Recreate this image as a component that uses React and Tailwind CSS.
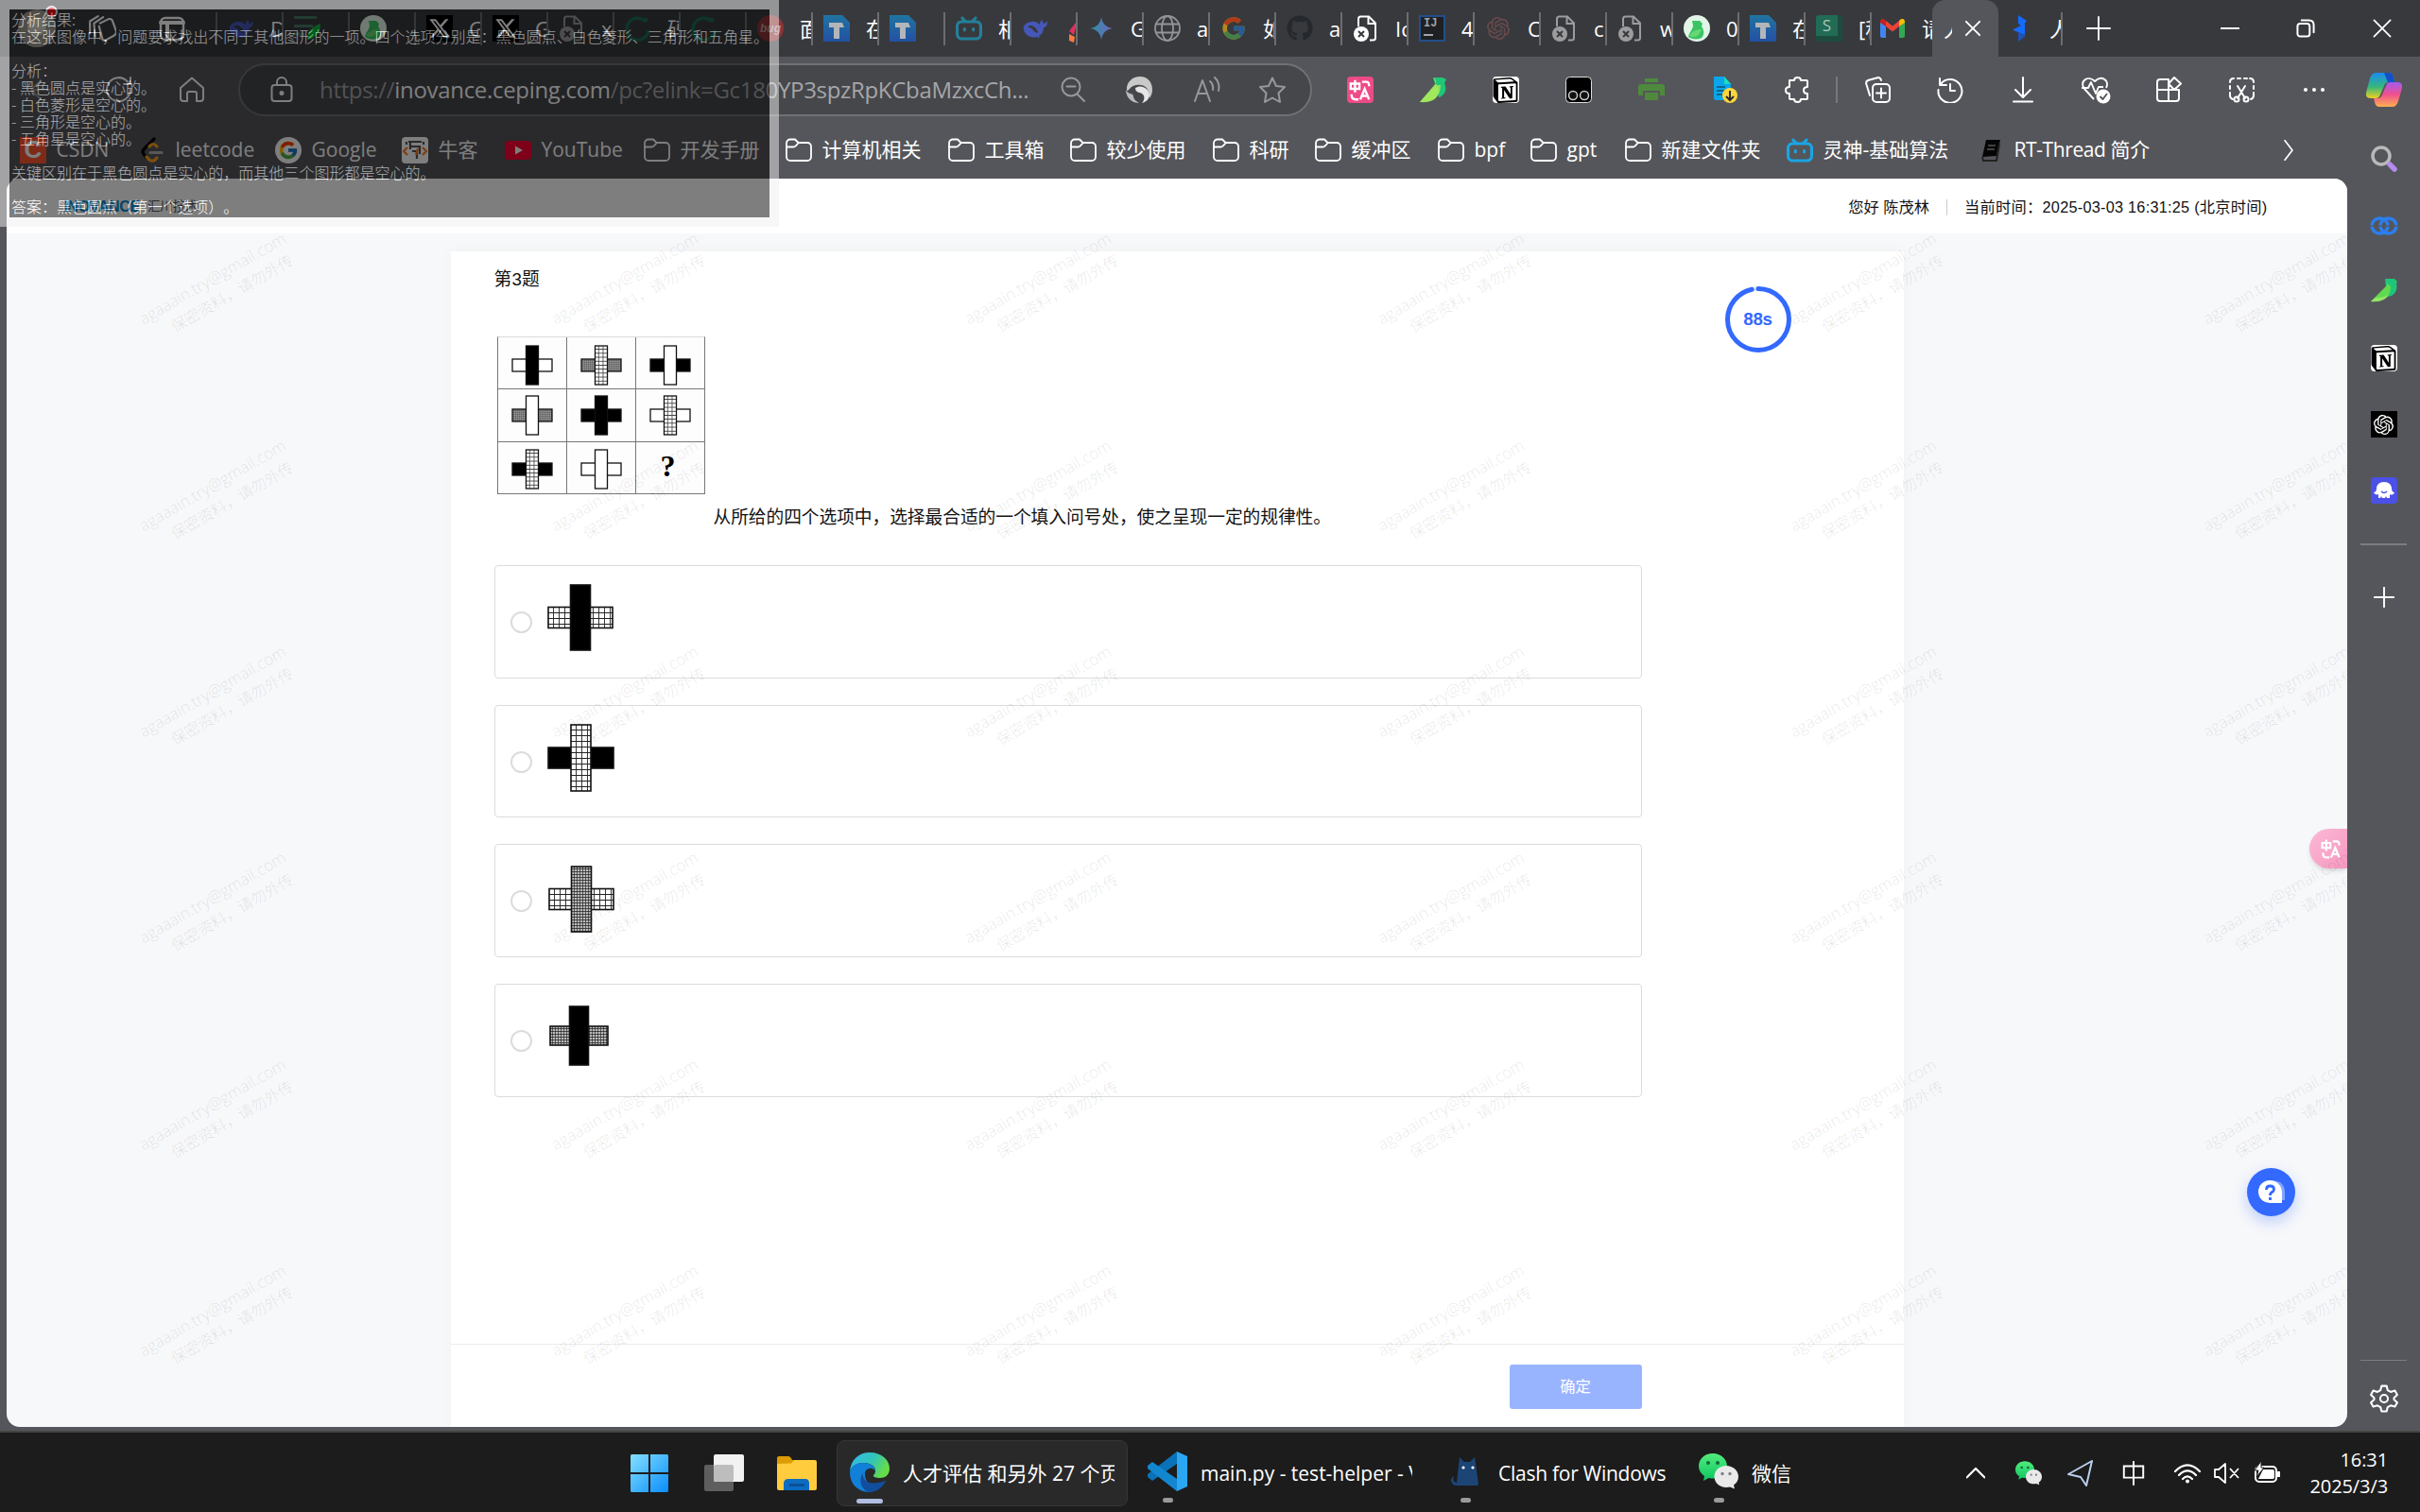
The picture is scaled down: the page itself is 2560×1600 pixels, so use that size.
import React from "react";
import { FcGoogle } from "react-icons/fc";
import { FaGithub, FaXTwitter } from "react-icons/fa6";
import { SiBilibili, SiOpenai, SiNotion } from "react-icons/si";

/* ---------- small icon helpers ---------- */

const Line = ({ size = 28, w = 2, color = "#fff", className = "", children }) => (
  <svg className={"shrink-0 " + className} width={size} height={size} viewBox="0 0 28 28" fill="none" stroke={color} strokeWidth={w} strokeLinecap="round" strokeLinejoin="round">
    {children}
  </svg>
);

const FolderIcon = () => (
  <Line w={1.8}>
    <path d="M1 6.500a4 4 0 0 1 4-4h5l3.500 3.500H23a4 4 0 0 1 4 4v11a4 4 0 0 1-4 4H5a4 4 0 0 1-4-4z" />
    <path d="M1 10.500h7.500a3 3 0 0 0 2-.8L13.500 6.500" />
  </Line>
);

const DeepSeek = () => (
  <svg width="28" height="28" viewBox="0 0 28 28">
    <path fill="#4657b8" d="M27 7c-2 0-2 2-4 2-1-1-1.500-3-1-4-3 1-3 4-3 5-3-2-5-4-9-3C3 8 1 12 2 16c2 6 9 9 14 7 1 1 2 1 3 1 0-1-1-1-1-2 4-2 5-6 5-9 2 0 4-2 4-6z" />
    <path fill="#38393d" d="M9 11c3 0 6 2 8 7 0 1-2 1-3 0-2-2-4-5-7-5-1 0 0-2 2-2z" />
  </svg>
);

const LeafDoc = () => (
  <svg width="28" height="28" viewBox="0 0 28 28">
    <path d="M1 2.500h22M1 11.500h18M1 20h9" stroke="#477a66" strokeWidth="3" strokeLinecap="round" />
    <path d="M28 9c0 10-5 16-14 17 0-9 5-14 14-17z" fill="#10b53f" />
  </svg>
);

const BirdRound = () => (
  <svg width="28" height="28" viewBox="0 0 28 28">
    <circle cx="14" cy="14" r="14" fill="#e2f6e8" />
    <path d="M9 6h8l3 3-1 3c3 4 3 9 0 12-2 2-11 2-14-1 1-5 5-8 5-12z" fill="#3bc463" />
    <path d="M6 22c3-5 7-7 13-7-2 6-6 10-13 7z" fill="#7be07a" opacity=".7" />
  </svg>
);

const XIcon = () => (
  <div className="flex size-7 items-center justify-center bg-black text-[24px] text-white">
    <FaXTwitter />
  </div>
);

const FileX = ({ bright }) => (
  <svg width="28" height="28" viewBox="0 0 28 28" opacity={bright ? 1 : 0.5}>
    <path d="M6 12V4a2.500 2.500 0 0 1 2.500-2.500H17l7 7V24a2.500 2.500 0 0 1-2.500 2.500H18M16.500 2v7H24" fill="none" stroke="#fff" strokeWidth="2" />
    <circle cx="9" cy="20" r="8" fill="#fff" />
    <path d="M6 17l6 6M12 17l-6 6" stroke="#38393d" strokeWidth="2" />
  </svg>
);

const Ring = () => (
  <svg width="28" height="28" viewBox="0 0 28 28">
    <path d="M22 7a11.500 11.500 0 1 0 3 9" fill="none" stroke="#1f6a55" strokeWidth="3.500" />
    <circle cx="22" cy="5" r="2.500" fill="#1f6a55" />
  </svg>
);

const Bug = () => (
  <div className="flex size-7 items-center justify-center rounded-full bg-[#8e3338] font-['Liberation_Sans',sans-serif] text-[12px] font-bold italic text-[#b9999a]">bug</div>
);

const TDoc = () => (
  <svg width="28" height="28" viewBox="0 0 28 28">
    <defs>
      <linearGradient id="tdoc" x1="0" y1="0" x2="0" y2="1">
        <stop offset="0" stopColor="#1f74a0" />
        <stop offset="1" stopColor="#2450a4" />
      </linearGradient>
    </defs>
    <path d="M0 0h20l8 8v20H0z" fill="url(#tdoc)" />
    <path d="M6 8h14l2 5h-5v12h-6V13H6z" fill="#b2b5b9" />
  </svg>
);

const Gemini = () => (
  <svg width="28" height="28" viewBox="0 0 28 28">
    <defs>
      <linearGradient id="gem" x1="0" y1="0" x2="1" y2="0">
        <stop offset="0" stopColor="#2f8fa0" />
        <stop offset="1" stopColor="#6a6ac0" />
      </linearGradient>
    </defs>
    <path d="M14 2c1 7 5 11 12 12-7 1-11 5-12 12-1-7-5-11-12-12 7-1 11-5 12-12z" fill="url(#gem)" />
  </svg>
);

const Globe = () => (
  <Line w={1.8} color="#939498">
    <circle cx="14" cy="14" r="13" />
    <ellipse cx="14" cy="14" rx="6" ry="13" />
    <path d="M2 9.500h24M2 18.500h24" />
  </Line>
);

const IJ = () => (
  <div className="flex size-7 flex-col justify-between border-2 border-[#22508c] bg-[#1f2023] px-[3px] pb-1 pt-px font-['Liberation_Mono',monospace] text-[12px] font-bold leading-[13px] text-[#a3a4a8]">
    IJ
    <i className="block h-0.5 w-2.5 bg-[#a3a4a8]" />
  </div>
);

const SDoc = () => (
  <div className="flex size-7 justify-center rounded-[3px] border-b-[6px] border-r-[5px] border-[#1d4c3e] bg-[#226b54] text-[17px] leading-[22px] text-[#a9c4bb]">S</div>
);

const Gmail = () => (
  <svg className="shrink-0" width="26" height="20" viewBox="0 0 26 20">
    <path d="M0 3v15a2 2 0 0 0 2 2h4V8z" fill="#4285f4" />
    <path d="M26 3v15a2 2 0 0 1-2 2h-4V8z" fill="#34a853" />
    <path d="M6 8v-6l7 5.500L20 2v6l-7 5.500z" fill="#ea4335" />
    <path d="M0 3c0-3 3-4 5-2l1 1v6L0 4z" fill="#c5221f" />
    <path d="M26 3c0-3-3-4-5-2l-1 1v6l6-4z" fill="#fbbc04" />
  </svg>
);

const BlueBolt = () => (
  <svg className="shrink-0" width="14" height="28" viewBox="0 0 14 28">
    <path d="M5 0l9 6-5 6-4-3zM0 15l12-6v12L0 16z" fill="#146bff" />
    <path d="M5 18l8 4-8 6z" fill="#1f53b5" />
  </svg>
);

const Bird = () => (
  <svg width="28" height="28" viewBox="0 0 28 28">
    <path d="M14 1h10l4 2-2 4c3 6 1 13-6 15z" fill="#1fc67a" />
    <path d="M14 1c4 4 3 4 3 6L0 27c12 1 20-3 20-13z" fill="#8fe35c" />
    <path d="M18 9c-5 4-12 11-18 18 13 1 22-5 22-18z" fill="#a7ea5e" opacity=".75" />
  </svg>
);

const BirdSide = () => (
  <svg width="28" height="26" viewBox="0 0 28 26">
    <path d="M15 1h10l3 3-1 2c2 8-3 14-10 14z" fill="#1fc67a" />
    <path d="M17 5v3L0 25c12 1 21-4 21-16-2-2-4-2-4-4z" fill="#62d94f" />
    <path d="M5 21c6 0 11-1 14-3-3 5-10 8-19 7z" fill="#94e667" />
  </svg>
);

const Translate = ({ s = 28 }) => (
  <svg width={s} height={s} viewBox="0 0 28 28" fill="none" stroke="#fff" strokeWidth="2.600">
    <path d="M3 7h10v6H3zM8 3v14M16 5h5q3 0 3 5M4 19v1q0 5 5 5h3M14 25l5-12 5 12M15.500 21h7" />
  </svg>
);

const OpenAIMark = ({ className = "" }) => <SiOpenai className={className} />;

const WeChat = ({ size = 42 }) => (
  <svg width={size} height={size} viewBox="0 0 42 42">
    <defs>
      <linearGradient id="wcg" x1="0" y1="0" x2="0" y2="1">
        <stop offset="0" stopColor="#52ec7c" />
        <stop offset="1" stopColor="#0cc662" />
      </linearGradient>
    </defs>
    <path d="M15 2C6 2 0 8 0 15.500c0 4 2 8 6 10.500L5 31l5.500-3c2 .4 3.500.5 5 .5C24 28.500 30 22.500 30 15.500S24 2 15 2z" fill="url(#wcg)" />
    <circle cx="10" cy="12" r="2" fill="#136b39" />
    <circle cx="20" cy="12" r="2" fill="#136b39" />
    <path d="M29 15c-7 0-12.500 5-12.500 11.500S22 38 29 38c1.500 0 3-.2 4-.5l5 2-1-4c3-2 5-5 5-9C42 20 36 15 29 15z" fill="#e9e9e9" />
    <circle cx="25" cy="23.500" r="1.700" fill="#808080" />
    <circle cx="33" cy="23.500" r="1.700" fill="#808080" />
  </svg>
);

/* ---------- tab strip ---------- */

const Rocket = () => (
  <svg width="12" height="24" viewBox="0 0 12 24" className="mt-[6px] translate-x-1">
    <path d="M10 0L1 12l5 4z" fill="#e0315e" />
    <path d="M10 6l-2 10 4 2V6z" fill="#f3f3f3" />
    <path d="M1 15l6 3-1 6-5-2z" fill="#ff7a3d" />
  </svg>
);

const TABS = [
  [<DeepSeek />, "D"],
  [<LeafDoc />, ""],
  [<BirdRound />, ""],
  [<XIcon />, "G"],
  [<XIcon />, "G"],
  [<FileX />, "x"],
  [<Ring />, "码"],
  [<Ring />, "（"],
  [<Bug />, "面"],
  [<TDoc />, "在"],
  [<TDoc />, ""],
  [<SiBilibili className="size-7 text-[#23809a]" />, "相"],
  [<DeepSeek />, <Rocket />],
  [<Gemini />, "G"],
  [<Globe />, "a"],
  [<FcGoogle className="size-[30px] opacity-60" />, "如"],
  [<FaGithub className="size-7 text-[#25292e]" />, "a"],
  [<FileX bright />, "Ic"],
  [<IJ />, "4"],
  [<OpenAIMark className="size-6 text-[#6a4a4c]" />, "C"],
  [<FileX />, "c"],
  [<FileX />, "w"],
  [<BirdRound />, "0"],
  [<TDoc />, "在"],
  [<SDoc />, "[程"],
];

function Tab({ icon, label }) {
  return (
    <div className="flex h-[35px] w-[70px] shrink-0 items-center overflow-hidden border-r-2 border-[#6c6d71] pl-[11px]">
      <span className="flex w-7 shrink-0 justify-center">{icon}</span>
      <span className="ml-[17px] w-[14px] shrink-0 overflow-hidden whitespace-nowrap text-[22px] leading-[35px]">{label}</span>
    </div>
  );
}

function TabStrip() {
  return (
    <div className="flex h-[60px] shrink-0 items-center bg-[#38393d] text-white">
      <div className="relative ml-[19px] size-10 shrink-0 rounded-full bg-[#a19d92]">
        <div className="mx-auto mt-2 size-5 rounded-full bg-[#d9d6ce]" />
        <i className="absolute -top-1 right-[-2px] size-[13px] rounded-full border-2 border-[#eee] bg-[#e0101b]" />
      </div>
      <Line size={30} className="ml-[34px]">
        <path d="M12 9l8-4q3-1 4 1l4 11q0 3-2 4l-9 5q-3 0-3-3L11 12M7 22L6 9l9-6M2 19V7l8-5" />
      </Line>
      <Line size={28} className="ml-[45px]" w={2.4}>
        <rect x="2" y="3" width="24" height="23" rx="5" />
        <path d="M2 8h24M9 9v17" strokeWidth="4" />
      </Line>
      <div className="ml-[32px] flex items-center border-l-2 border-[#6c6d71]">
        {TABS.map(([icon, label], i) => (
          <Tab key={i} icon={icon} label={label} />
        ))}
      </div>
      <div className="flex h-[35px] w-[64px] shrink-0 items-center overflow-hidden pl-[9px]">
        <Gmail />
        <span className="ml-[18px] whitespace-nowrap text-[22px]">请</span>
      </div>
      <div className="flex h-[60px] w-[70px] shrink-0 items-center rounded-t-[14px] bg-[#55565b] pl-3">
        <span className="flex w-[9px] overflow-hidden text-[22px]">人</span>
        <Line size={20} className="ml-[12px]" w={2.6}>
          <path d="M4 4l20 20M24 4L4 24" />
        </Line>
      </div>
      <div className="flex h-[35px] w-[68px] shrink-0 items-center overflow-hidden border-r-2 border-[#6c6d71] pl-[16px]">
        <BlueBolt />
        <span className="ml-[24px] shrink-0 whitespace-nowrap text-[22px]">人</span>
      </div>
      <Line size={26} className="ml-[25px]">
        <path d="M14 1v26M1 14h26" />
      </Line>
      <Line size={20} className="ml-[116px]" w={2.6}>
        <path d="M1 14h26" />
      </Line>
      <Line size={20} className="ml-[60px]" w={2.8}>
        <rect x="2" y="7" width="18" height="19" rx="4" />
        <path d="M8 2h11q7 0 7 7v11" />
      </Line>
      <Line size={20} className="ml-[61px]" w={2.4}>
        <path d="M2 2l24 24M26 2L2 26" />
      </Line>
    </div>
  );
}

/* ---------- address bar ---------- */

const Slot = ({ children }) => <span className="flex w-[77px] shrink-0 justify-center">{children}</span>;

const NotionMark = () => (
  <span className="flex size-7 items-center justify-center rounded-sm bg-white">
    <SiNotion className="size-[27px] text-black" />
  </span>
);

function Toolbar() {
  return (
    <div className="flex h-[70px] shrink-0 items-center">
      <span className="flex w-[86px] justify-center">
        <Line color="#929397">
          <path d="M24 14H5M14 4L4 14l10 10" />
        </Line>
      </span>
      <span className="flex w-[80px] justify-center">
        <Line>
          <path d="M26 14a12.500 12.500 0 1 1-3-8.500M26 1v7h-7" />
        </Line>
      </span>
      <span className="flex w-[74px] justify-center">
        <Line>
          <path d="M2 12L14 1.500 26 12v11a3 3 0 0 1-3 3h-4v-8q0-2-2-2h-6q-2 0-2 2v8H5a3 3 0 0 1-3-3z" />
        </Line>
      </span>
      <div className="ml-[12px] flex h-[56px] w-[1136px] shrink-0 items-center rounded-full border-2 border-[#707175] bg-[#46474b] pl-[30px]">
        <Line>
          <rect x="3.500" y="9" width="21" height="17" rx="3" />
          <path d="M9 9V6a5 5 0 0 1 10 0v3" />
          <circle cx="14" cy="17.500" r="1.500" fill="#fff" />
        </Line>
        <span className="ml-[26px] w-[759px] whitespace-nowrap text-[24px] tracking-[-0.32px] text-[#a5a6a9]">
          https://<span className="text-white">inovance.ceping.com</span>/pc?elink=Gc180YP3spzRpKCbaMzxcCh...
        </span>
        <Line className="ml-6" color="#97989c">
          <circle cx="12" cy="11" r="9.500" />
          <path d="M19 19l7 7M7.500 10.500h9" />
        </Line>
        <svg className="ml-[42px]" width="28" height="28" viewBox="0 0 28 28">
          <path d="M1 15C0 6 7 0 15 0c8 0 13 6 13 14 0 3-1 6-3 9 0-8-3-13-9-14-5-1-10 1-12 4-1 1-2 2-3 2z" fill="#c9c9ca" />
          <path d="M0 14c3 6 8 3 8 7 0 3 3 5 6 7C6 28 0 22 0 14z" fill="#b9b9bb" />
          <path d="M10 12c6-4 14 0 15 7 0 4-3 8-8 9 3-3 3-7 1-9-2-3-8-1-8-7z" fill="#e6e6e7" />
        </svg>
        <Line className="ml-[44px]" color="#97989c">
          <path d="M1 26L9 4l8 22M4 18h10M17 5q4 3 3 9M22 1q6 6 4 14" />
        </Line>
        <Line className="ml-[41px]" color="#97989c">
          <path d="M14 1.500l4 8.500 9 1-6.500 6.500L22 27l-8-4.500L6 27l1.500-9.500L1 11l9-1z" />
        </Line>
      </div>
      <span className="w-[12px] shrink-0" />
      <Slot>
        <span className="flex size-7 items-center justify-center rounded bg-[#ee4a87]"><Translate s={26} /></span>
      </Slot>
      <Slot><Bird /></Slot>
      <Slot><NotionMark /></Slot>
      <Slot>
        <svg width="28" height="28" viewBox="0 0 28 28">
          <rect x=".5" y=".5" width="27" height="27" rx="4" fill="#000" stroke="#ddd" />
          <circle cx="8" cy="20" r="4.500" fill="#111" stroke="#ccc" strokeWidth="1.500" />
          <circle cx="20" cy="20" r="4.500" fill="#111" stroke="#ccc" strokeWidth="1.500" />
        </svg>
      </Slot>
      <Slot>
        <svg width="28" height="28" viewBox="0 0 28 28" fill="#4f8a3c">
          <path d="M7 2h14v4H7zM3 8h22q3 0 3 3v9h-5v-5H5v5H0v-9q0-3 3-3zM7 17h14v8H7z" />
        </svg>
      </Slot>
      <Slot>
        <svg width="28" height="28" viewBox="0 0 28 28">
          <path d="M3 0h11l7 8v17H5q-2 0-2-2z" fill="#0aa5ea" />
          <path d="M14 0l7 8h-7z" fill="#19dcc0" />
          <path d="M6 11h9M6 15h9M6 19h6" stroke="#12506e" strokeWidth="1.600" />
          <circle cx="20" cy="20" r="8" fill="#fbd63c" />
          <path d="M20 15v9M16 21l4 4 4-4" fill="none" stroke="#2b2b2b" strokeWidth="2" />
        </svg>
      </Slot>
      <Slot>
        <Line>
          <path d="M6 4h5q0-3 3.500-3T18 4h6q1 0 1 1v6q-4 0-4 3.500T25 18v5q0 1-1 1h-6q0 3-3.500 3T11 24H7q-1 0-1-1v-5q-4 0-4-3.500T6 11z" />
        </Line>
      </Slot>
      <span className="ml-[3px] mr-[3px] h-[28px] w-[2px] shrink-0 bg-[#77787c]" />
      <Slot>
        <Line>
          <rect x="9" y="8" width="18" height="19" rx="4" />
          <path d="M18 12.500v10M13 17.500h10M6 20L2 7q0-2 2-3l11-3q2 0 3 3" />
        </Line>
      </Slot>
      <Slot>
        <Line>
          <path d="M3 2v7h7M3.500 8.500A12.500 12.500 0 1 1 1.500 14M14 8v7h5" />
        </Line>
      </Slot>
      <Slot>
        <Line>
          <path d="M14 1v20M6 14l8 8 8-8M4 26.500h20" />
        </Line>
      </Slot>
      <Slot>
        <svg width="32" height="30" viewBox="0 0 32 30" fill="none" stroke="#fff" strokeWidth="1.900" strokeLinejoin="round">
          <path d="M14 25L4 14C-2 6 8-1 15 6c7-7 16-1 12 7M1 13h7l3-6 5 12 3-7h5" />
          <circle cx="24" cy="22" r="7.500" fill="#fff" stroke="none" />
          <path d="M20.500 22l3 3 4.500-6" stroke="#55565b" />
        </svg>
      </Slot>
      <Slot>
        <Line>
          <path d="M14 3H5a3 3 0 0 0-3 3v17a3 3 0 0 0 3 3h17a3 3 0 0 0 3-3v-9M2 14h23M14 3v23M20 1l7 6.500L20 14l-6-6.500z" />
        </Line>
      </Slot>
      <Slot>
        <Line>
          <path d="M2 6q0-4 4-4M10 2h3M17 2h3M23 2q4 0 4 4M2 10v3M27 10v3M2 17v3q0 3 3 4M27 17v3q0 3-3 4M10 10l8 13M18 10l-8 13" />
          <circle cx="9" cy="24" r="2.500" />
          <circle cx="19" cy="24" r="2.500" />
        </Line>
      </Slot>
      <Slot>
        <svg width="28" height="28" viewBox="0 0 28 28" fill="#fff">
          <circle cx="5" cy="14" r="2" />
          <circle cx="14" cy="14" r="2" />
          <circle cx="23" cy="14" r="2" />
        </svg>
      </Slot>
      <span className="flex w-[71px] shrink-0 justify-center">
        <svg width="38" height="38" viewBox="0 0 38 38">
          <defs>
            <linearGradient id="cpa" x1="0" y1="0" x2="0" y2="1">
              <stop offset="0" stopColor="#1a8cf0" />
              <stop offset=".55" stopColor="#35b77c" />
              <stop offset="1" stopColor="#f0d020" />
            </linearGradient>
            <linearGradient id="cpb" x1="0" y1="0" x2="0" y2="1">
              <stop offset="0" stopColor="#a35bf0" />
              <stop offset=".5" stopColor="#f0508c" />
              <stop offset="1" stopColor="#ffb050" />
            </linearGradient>
          </defs>
          <path d="M10 1h14q4 0 5 5l1 5h-6q-4 0-5 4l-4 9q-1 4-5 4H5q-6 0-5-6l4-15q2-6 6-6z" fill="url(#cpa)" />
          <path d="M19 1h5q4 0 5 5l1 5h-7z" fill="#1450c8" />
          <path d="M28 37H14q-4 0-5-5l-1-4h4q4 0 5-4l4-9q1-4 5-4h7q6 0 5 6l-4 14q-2 6-6 6z" fill="url(#cpb)" />
        </svg>
      </span>
    </div>
  );
}

/* ---------- bookmarks ---------- */

const LeetCode = () => (
  <svg width="24" height="28" viewBox="0 0 24 28" fill="none" strokeLinecap="round" strokeWidth="3.200">
    <path d="M14 2L3 13q-2 3 0 5l3 4" stroke="#000" />
    <path d="M9 10q4-5 8 0M6 21q6 8 11 1" stroke="#f9a11b" />
    <path d="M10 16.500h12" stroke="#b3b3b3" />
  </svg>
);

const NiuKe = () => (
  <span className="flex size-7 items-center justify-center rounded-sm bg-white">
    <svg width="26" height="24" viewBox="0 0 26 24" fill="none" strokeWidth="2.200">
      <path d="M6 3h14M8 3v8M8 8h10v8M10 13h5v8M4 3v3M22 3v3" stroke="#555" />
      <path d="M5 9l-4 4 4 4M21 9l4 4-4 4M14 17l2-7" stroke="#ff7a1f" />
    </svg>
  </span>
);

const BOOKMARKS = [
  ["w-[126px]", "CSDN", <span className="flex size-7 items-center justify-center bg-[#fc5531] font-['Liberation_Sans',sans-serif] text-[26px] font-bold text-white">C</span>],
  ["w-[144px]", "leetcode", <LeetCode />],
  ["w-[134px]", "Google", <span className="flex size-7 items-center justify-center rounded-full bg-white"><FcGoogle className="size-[22px]" /></span>],
  ["w-[109px]", "牛客", <NiuKe />],
  ["w-[147px]", "YouTube", (
    <svg width="28" height="20" viewBox="0 0 28 20">
      <rect width="28" height="20" rx="4" fill="#ff0033" />
      <path d="M11 5.500l8 4.500-8 4.500z" fill="#fff" />
    </svg>
  )],
  ["w-[150px]", "开发手册"],
  ["w-[172px]", "计算机相关"],
  ["w-[129px]", "工具箱"],
  ["w-[151px]", "较少使用"],
  ["w-[108px]", "科研"],
  ["w-[130px]", "缓冲区"],
  ["w-[98px]", "bpf"],
  ["w-[100px]", "gpt"],
  ["w-[171px]", "新建文件夹"],
  ["w-[202px]", "灵神-基础算法", <SiBilibili className="size-7 text-[#1ba4e2]" />],
  ["w-[199px] tracking-[-0.4px]", "RT-Thread 简介", (
    <svg width="28" height="24" viewBox="0 0 28 24">
      <path d="M9 1h15l-4 17-15 1z" fill="#050505" />
      <path d="M5 19l1 4h14l3-18" fill="none" stroke="#222" strokeWidth="2" />
      <path d="M11 7h8M10 11h8" stroke="#555" strokeWidth="1.500" />
    </svg>
  )],
];

function Bookmarks() {
  return (
    <div className="flex h-[57px] shrink-0 items-center pl-[21px] text-[21px] text-white">
      {BOOKMARKS.map(([w, label, icon]) => (
        <div key={label} className={"flex shrink-0 items-center gap-[10.5px] whitespace-nowrap " + w}>
          <span className="flex w-7 shrink-0 justify-center">{icon || <FolderIcon />}</span>
          {label}
        </div>
      ))}
      <Line size={22} className="ml-[119px]" w={2.2}>
        <path d="M9 1l10 13L9 27" />
      </Line>
    </div>
  );
}

/* ---------- puzzle figures ---------- */

function Defs() {
  return (
    <svg className="absolute size-0">
      <defs>
        <pattern id="grid" width="6" height="6" patternUnits="userSpaceOnUse">
          <rect width="6" height="6" fill="#fff" />
          <path d="M0 0h6M0 0v6" stroke="#222" strokeWidth="1.800" />
        </pattern>
        <pattern id="gridS" width="4.700" height="4.200" patternUnits="userSpaceOnUse">
          <rect width="5" height="5" fill="#fff" />
          <path d="M0 0h5M0 0v5" stroke="#333" strokeWidth="1.500" />
        </pattern>
        <pattern id="fine" width="3" height="3" patternUnits="userSpaceOnUse">
          <rect width="3" height="3" fill="#bbb" />
          <path d="M0 0h3M0 0v3" stroke="#222" strokeWidth="1.300" />
        </pattern>
        <pattern id="fineS" width="2" height="2" patternUnits="userSpaceOnUse">
          <rect width="2" height="2" fill="#999" />
          <path d="M0 0h2M0 0v2" stroke="#555" strokeWidth="1" />
        </pattern>
      </defs>
    </svg>
  );
}

const FILL = { b: "#000", w: "#fff", g: "url(#grid)", f: "url(#fine)", gs: "url(#gridS)", fs: "url(#fineS)" };

function Cross({ w, h, barW, barH, across, down, stroke = 1.6 }) {
  return (
    <svg width={w} height={h} viewBox={`0 0 ${w} ${h}`} className="shrink-0">
      <rect x="1" y={(h - barH) / 2} width={w - 2} height={barH} fill={FILL[across]} stroke="#111" strokeWidth={stroke} />
      <rect x={(w - barW) / 2} y="1" width={barW} height={h - 2} fill={FILL[down]} stroke="#111" strokeWidth={stroke} />
    </svg>
  );
}

const CELLS = [
  ["w", "b"], ["fs", "gs"], ["b", "w"],
  ["fs", "w"], ["b", "b"], ["w", "gs"],
  ["b", "gs"], ["w", "w"], null,
];

function Matrix() {
  return (
    <div className="grid h-[167px] w-[220px] shrink-0 grid-cols-3 grid-rows-3 gap-px border border-[#777] border-t-[#ddd] bg-[#777]">
      {CELLS.map((c, i) => (
        <div key={i} className={i < 3 ? "flex items-center justify-center bg-[#fdfdfd] pt-[5px]" : i < 6 ? "flex items-center justify-center bg-[#fdfdfd]" : "flex items-center justify-center bg-[#fdfdfd] pt-[3px]"}>
          {c ? (
            <Cross w={44} h={43} barW={13} barH={13} across={c[0]} down={c[1]} stroke={1.3} />
          ) : (
            <span className="pb-1.5 pr-1 font-['Liberation_Serif',serif] text-[32px] font-bold leading-none text-black">?</span>
          )}
        </div>
      ))}
    </div>
  );
}

const OPTIONS = [
  { pad: "ml-[16px] mb-[9px]", w: 70, h: 71, barW: 21, barH: 22, across: "g", down: "b" },
  { pad: "ml-[16px] mb-[8px]", w: 71, h: 72, barW: 21, barH: 22, across: "b", down: "g" },
  { pad: "ml-[17px] mb-[4px]", w: 70, h: 71, barW: 21, barH: 22, across: "g", down: "f" },
  { pad: "ml-[18px] mb-[10px]", w: 63, h: 64, barW: 20, barH: 20, across: "f", down: "b" },
];

/* ---------- page ---------- */

function Watermarks() {
  return (
    <div className="pointer-events-none absolute inset-x-0 bottom-0 top-[58px] overflow-hidden">
      <div className="-mt-[51px] ml-[5px] grid w-[2622px] auto-rows-[218.400px] grid-cols-[repeat(6,436.700px)] font-['Open_Sans','Noto_Sans_CJK_SC',sans-serif] text-[17px] font-light leading-[24px] text-black/[0.11]">
        {Array.from({ length: 36 }, (_, i) => (
          <div key={i} className="flex items-center justify-center">
            <div className="-rotate-[30deg] whitespace-nowrap text-center">
              agaaain.try@gmail.com
              <br />
              <span className="ml-5 text-[16.250px]">保密资料，请勿外传</span>
            </div>
          </div>
        ))}
      </div>
    </div>
  );
}

function Page() {
  return (
    <div className="relative flex h-[1321px] w-[2476px] shrink-0 flex-col overflow-hidden rounded-[14px] bg-[#f7f8fa] font-['Liberation_Sans','Noto_Sans_CJK_SC',sans-serif] text-[#111]">
      <div className="flex h-[58px] shrink-0 items-center bg-white pl-[60px] pr-[85px] pt-[2px] text-[16.250px]">
        <b className="text-[16px] tracking-[-0.3px] text-[#0a8ccb]">INOVANCE</b>
        <span className="ml-2 text-[13.500px] text-[#555]">汇川技术</span>
        <span className="ml-auto">您好 陈茂林</span>
        <span className="mx-[18px] h-[17px] w-px bg-[#ccc]" />
        <span className="w-[320px] whitespace-nowrap tracking-[0.26px]">当前时间：2025-03-03 16:31:25 (北京时间)</span>
      </div>
      <div className="mx-auto mt-[19px] flex w-[1537px] flex-1 flex-col bg-white shadow-[0_0_14px_rgba(0,0,0,0.03)]">
        <div className="flex h-[1156px] shrink-0 justify-between pl-[46px] pr-[119px]">
          <div className="flex w-[1214px] flex-col">
            <div className="mt-[16px] text-[18.750px] leading-[28px] tracking-[0.2px]">第3题</div>
            <div className="ml-[3px] mt-[46px] flex h-[206px] items-start">
              <Matrix />
              <span className="ml-[9px] self-end whitespace-nowrap text-[18.750px] leading-[28px] tracking-[-0.08px]">
                从所给的四个选项中，选择最合适的一个填入问号处，使之呈现一定的规律性。
              </span>
            </div>
            <div className="mt-[36px] flex flex-col gap-[28px]">
              {OPTIONS.map(({ pad, ...fig }, i) => (
                <div key={i} className="flex h-[119.700px] items-center rounded-[4px] border border-[#dcdcdc] pl-[16px] pt-px">
                  <span className="size-[23px] rounded-full border-2 border-[#dcdcdc]" />
                  <span className={pad}><Cross {...fig} /></span>
                </div>
              ))}
            </div>
          </div>
          <div className="mt-[37px] grid size-[70px] place-items-center">
            <svg className="col-start-1 row-start-1" width="70" height="70" viewBox="0 0 70 70">
              <circle cx="35" cy="35" r="32.500" fill="none" stroke="#e5e9f2" strokeWidth="4" />
              <circle cx="35" cy="35" r="32.500" fill="none" stroke="#3369ff" strokeWidth="5" strokeLinecap="round" strokeDasharray="197 8" transform="rotate(-90 35 35)" />
            </svg>
            <b className="col-start-1 row-start-1 text-[18.750px] leading-none tracking-[-0.3px] text-[#3369ff]">88s</b>
          </div>
        </div>
        <div className="flex flex-1 items-center border-t border-[#ececec] pl-[1120px] pt-px">
          <button className="h-[47px] w-[140px] rounded-[3px] bg-[#99b4ff] text-[16.250px] text-white">确定</button>
        </div>
      </div>
      <div className="absolute bottom-[591px] right-0 flex h-[42px] w-[40px] items-center rounded-l-full bg-[linear-gradient(135deg,#fcb9d6,#f598c0)] pl-[11px] shadow-md">
        <Translate s={24} />
      </div>
      <div className="absolute bottom-[223px] right-[55px] flex size-[51px] items-center justify-center rounded-full bg-[#3369ff] shadow-[0_6px_16px_rgba(51,105,255,0.3)]">
        <svg width="30" height="28" viewBox="0 0 30 28">
          <path d="M16 1q13 1 13 13v8h-4z" fill="#fff" opacity=".4" />
          <path d="M13 1a13 13 0 0 1 13 13v11H13A12 12 0 0 1 13 1z" fill="#fff" />
          <path d="M9.500 11q0-4 4-4t4 3.500q0 2-2 3t-2 3.500M13.500 19v3" fill="none" stroke="#3369ff" strokeWidth="2.800" />
        </svg>
      </div>
      <Watermarks />
    </div>
  );
}

/* ---------- edge sidebar ---------- */

function Sidebar() {
  return (
    <div className="flex h-[1321px] w-[77px] flex-col items-center pb-[15px]">
      <svg className="-mt-[35px] shrink-0" width="28" height="28" viewBox="0 0 28 28" fill="none">
        <circle cx="11" cy="11" r="9" stroke="#b9b9b9" strokeWidth="3.500" />
        <path d="M20 20l5 5" stroke="#b48bf0" strokeWidth="5.500" strokeLinecap="round" />
      </svg>
      <svg className="mt-[46px]" width="30" height="22" viewBox="0 0 30 22" fill="none" stroke="#2b7ff0" strokeWidth="3.500">
        <ellipse cx="10.500" cy="11" rx="8.500" ry="8" />
        <ellipse cx="19.500" cy="11" rx="8.500" ry="8" />
        <path d="M0 11h30" stroke="#55565b" strokeWidth="1.200" />
      </svg>
      <span className="mt-[44px]"><BirdSide /></span>
      <span className="mt-[45px]"><NotionMark /></span>
      <span className="mt-[42px] flex size-7 items-center justify-center bg-black text-[21px] text-white"><OpenAIMark /></span>
      <span className="mt-[42px] flex size-7 items-center justify-center rounded bg-[#4b50e6]">
        <svg width="22" height="20" viewBox="0 0 22 20">
          <path d="M11 1c5 0 8 3 8 7 0 2 1 4 3 4-1 3-4 3-5 2v4h-3l-1-2-1 2h-3l-1-2-1 2H5v-4c-2 1-4 0-5-2 2 0 3-2 3-4 0-4 3-7 8-7z" fill="#fff" />
          <path d="M8 11q3 3 6 0" fill="none" stroke="#4b50e6" strokeWidth="1.500" />
        </svg>
      </span>
      <i className="mt-[42px] h-[2px] w-[49px] bg-[#7c7d81]" />
      <Line size={22} className="mt-[44px]" w={2.4}>
        <path d="M14 1v26M1 14h26" />
      </Line>
      <i className="mt-auto h-px w-[49px] bg-[#7c7d81]" />
      <Line size={30} className="mt-[25px]" w={1.9}>
        <circle cx="14" cy="14" r="3.800" />
        <path d="M11.500 1.500h5l1 4.200 3 1.700 4.200-1.300 2.300 4.100-3.200 3v1.800l3.200 3-2.300 4-4.200-1.200-3 1.700-1 4h-5l-1-4-3-1.700L3.300 22 1 18l3.200-3v-1.800L1 10.200l2.300-4.100 4.200 1.300 3-1.700z" />
      </Line>
    </div>
  );
}

/* ---------- taskbar ---------- */

const Dot = ({ active }) => <i className={active ? "mt-[7px] block h-[5px] w-[28px] rounded-full bg-[#b0bde0]" : "mt-[7px] block h-[5px] w-[11px] rounded-full bg-[#9a9a9a]"} />;

const AppIcon = ({ children, active, dot = true }) => (
  <span className="flex w-[42px] shrink-0 flex-col items-center pt-[12px]">
    <span className="flex h-[42px] items-center">{children}</span>
    {dot && <Dot active={active} />}
  </span>
);

function Taskbar() {
  return (
    <div className="flex h-[84px] shrink-0 items-center bg-[#1c1c1c] pl-[666px] pt-[2px] text-[21px] text-white">
      <svg width="42" height="42" viewBox="0 0 42 42">
        <defs>
          <linearGradient id="win" x1="0" y1="0" x2="1" y2="1">
            <stop offset="0" stopColor="#84e0ff" />
            <stop offset="1" stopColor="#0a8dfb" />
          </linearGradient>
        </defs>
        <path d="M1 2.500Q1 1 2.500 1H20v19H1zM22 1h17.500Q41 1 41 2.500V20H22zM1 22h19v19H2.500Q1 41 1 39.500zM22 22h19v17.500q0 1.500-1.500 1.500H22z" fill="url(#win)" />
      </svg>
      <svg className="ml-[36px]" width="44" height="42" viewBox="0 0 44 42">
        <rect x="1" y="12" width="31" height="28" rx="2" fill="#5e5e5e" />
        <rect x="11" y="1" width="32" height="29" rx="2" fill="#f2f2f2" />
        <rect x="11" y="12" width="21" height="18" rx="2" fill="#bdbdbd" />
      </svg>
      <svg className="ml-[34px]" width="42" height="42" viewBox="0 0 42 42">
        <path d="M0 5q0-2 2-2h10q2 0 4 4h5v6H0z" fill="#dc9c04" />
        <path d="M0 11l15-.5L18 7h22q2 0 2 2v28q0 2-2 2H2q-2 0-2-2z" fill="#ffcc3e" />
        <path d="M7 39V32q0-5 5-5h18q4 0 4 5v7z" fill="#0b6cc0" />
        <path d="M13 33.500h16" stroke="#0a4d90" strokeWidth="2.500" />
      </svg>
      <div className="ml-[21px] flex h-[70px] w-[308px] shrink-0 items-start rounded-[8px] border border-[#363636] bg-[#292929] pl-[13px]">
        <AppIcon active>
          <svg width="42" height="42" viewBox="0 0 42 42">
            <defs>
              <linearGradient id="ed1" x1="0" y1="0" x2="1" y2=".4">
                <stop offset="0" stopColor="#35b8f0" />
                <stop offset=".6" stopColor="#31c5b8" />
                <stop offset="1" stopColor="#66dd48" />
              </linearGradient>
            </defs>
            <path d="M0 20C1 7 10 0 21 0c13 0 21 8 21 17 0 7-5 10-10 10-4 0-8-1-7-3 1-1 2-2 2-5 0-4-5-8-12-8C8 11 2 14 0 20z" fill="url(#ed1)" />
            <path d="M0 21c1-7 7-10 14-10 9 0 13 5 13 9-1-4-9-5-11 1-1 10 7 17 14 15-3 4-7 6-11 6C8 41 0 33 0 21z" fill="#1180d8" />
            <path d="M14 22c-1 8 7 12 15 10 4 0 7-2 9-2-3 7-10 12-17 12-8-1-13-13-7-20z" fill="#114f9e" />
          </svg>
        </AppIcon>
        <span className="ml-[14px] w-[224px] overflow-hidden whitespace-nowrap leading-[68px]">人才评估 和另外 27 个页面</span>
      </div>
      <div className="ml-[21px] flex h-[70px] w-[281px] shrink-0 items-start">
        <AppIcon>
          <svg width="42" height="42" viewBox="0 0 42 42">
            <path d="M31 0v13L5 31l-5-4v-3z" fill="#0a72b8" />
            <path d="M31 42V29L5 11l-5 4v3z" fill="#1287d0" />
            <path d="M31 0l11 5v32l-11 5z" fill="#2ba6f2" />
          </svg>
        </AppIcon>
        <span className="ml-[14px] w-[224px] overflow-hidden whitespace-nowrap leading-[70px]">main.py - test-helper - Visual</span>
      </div>
      <div className="ml-[34px] flex h-[70px] w-[234px] shrink-0 items-start">
        <AppIcon>
          <svg width="30" height="32" viewBox="0 0 30 32">
            <path d="M9 1l5 5h6l5-5 4 28q0 2-2 2H6q-5 0-6-5 0-4 3-5-2 6 3 7z" fill="#1c4576" />
            <circle cx="13" cy="12" r="1.600" fill="#fff" />
            <circle cx="23" cy="12" r="1.600" fill="#fff" />
          </svg>
        </AppIcon>
        <span className="ml-[14px] whitespace-nowrap leading-[70px] tracking-[-0.25px]">Clash for Windows</span>
      </div>
      <div className="ml-[34px] flex h-[70px] shrink-0 items-start">
        <AppIcon><WeChat /></AppIcon>
        <span className="ml-[14px] whitespace-nowrap leading-[70px]">微信</span>
      </div>
      <div className="ml-auto mr-[34px] flex items-center">
        <Line size={20} w={3.2}><path d="M1 20L14 7l13 13" /></Line>
        <span className="ml-[32px]"><WeChat size={28} /></span>
        <Line className="ml-[27px]" color="#b9d0ee"><path d="M26 1L1 15l13 3 6 9z" /></Line>
        <Line className="ml-[29px]" size={26} w={2.1}><path d="M3 6h22v13H3zM14 1v26" strokeLinejoin="miter" /></Line>
        <svg className="ml-[29px]" width="30" height="24" viewBox="0 0 30 24" fill="none" stroke="#fff" strokeWidth="2.200" strokeLinecap="round">
          <path d="M2 10q13-13 26 0M6 14q9-9 18 0M10 18q5-5 10 0" />
          <circle cx="15" cy="20.500" r="2" fill="#fff" stroke="none" />
        </svg>
        <svg className="ml-[13px]" width="28" height="22" viewBox="0 0 28 22" fill="none" stroke="#fff" strokeWidth="1.800" strokeLinejoin="round">
          <path d="M1 7h4l7-6v20l-7-6H1zM17 6l9 10M26 6l-9 10" />
        </svg>
        <svg className="ml-[14px]" width="30" height="26" viewBox="0 0 30 26">
          <rect x="2" y="6" width="22" height="16" rx="4" fill="none" stroke="#fff" strokeWidth="2" />
          <path d="M25 11h3v6h-3z" fill="#fff" />
          <path d="M10 9h10q2 0 2 2v6q0 2-2 2H5z" fill="#fff" />
          <path d="M8 0L1 10h4l-2 7L11 7H8z" fill="#fff" stroke="#1c1c1c" />
        </svg>
        <div className="ml-[12px] w-[100px] text-right text-[20px] leading-[28px] tracking-[-0.1px]">
          16:31
          <br />
          2025/3/3
        </div>
      </div>
    </div>
  );
}

/* ---------- translucent answer window ---------- */

const ANSWER = `分析结果:
在这张图像中，问题要求找出不同于其他图形的一项。四个选项分别是：黑色圆点、白色菱形、三角形和五角星。

分析：
- 黑色圆点是实心的。
- 白色菱形是空心的。
- 三角形是空心的。
- 五角星是空心的。

关键区别在于黑色圆点是实心的，而其他三个图形都是空心的。

答案：黑色圆点（第一个选项）。`;

function AnswerWindow() {
  return (
    <div className="absolute left-0 top-0 h-[240px] w-[824px] bg-[#f0f0f0] p-[10px] opacity-50">
      <pre className="h-[220px] overflow-hidden bg-black pl-[2px] pt-px font-['Noto_Sans_CJK_SC',sans-serif] text-[16px] font-light leading-[18px] tracking-[0.02px] text-white [text-spacing-trim:space-all]">{ANSWER}</pre>
    </div>
  );
}

export default function App() {
  return (
    <div className="relative flex h-[1600px] w-[2560px] flex-col overflow-hidden bg-[#55565b] font-['Open_Sans','Noto_Sans_CJK_SC',sans-serif]">
      <Defs />
      <TabStrip />
      <Toolbar />
      <Bookmarks />
      <div className="mt-[2px] flex h-[1327px] shrink-0 border-b-2 border-[#444] pl-[7px]">
        <Page />
        <Sidebar />
      </div>
      <Taskbar />
      <AnswerWindow />
    </div>
  );
}
